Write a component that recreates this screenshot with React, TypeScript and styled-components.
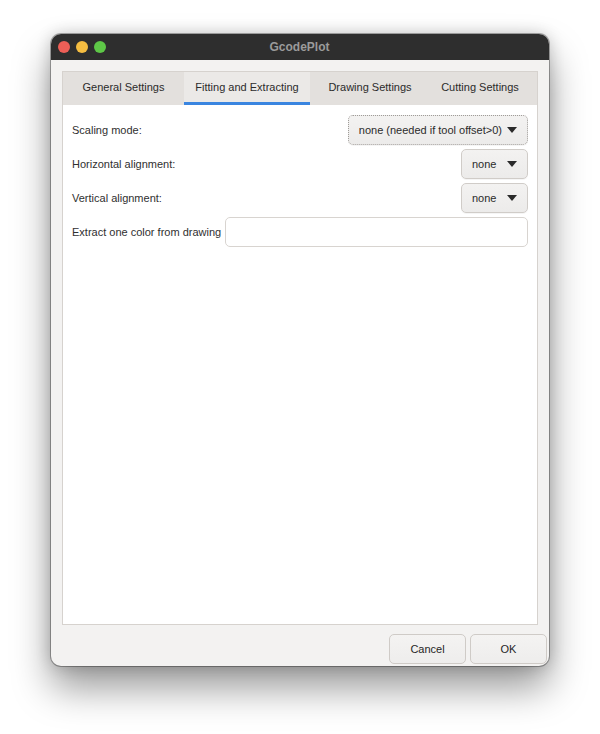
import React from "react";
import styled, { createGlobalStyle } from "styled-components";

const Global = createGlobalStyle`
  html, body { margin: 0; padding: 0; background: #ffffff; }
  body { font-family: "Liberation Sans", Arial, sans-serif; }
  * { box-sizing: border-box; }
`;

const Page = styled.div`
  width: 600px;
  height: 734px;
  padding: 34px 0 0 51px;
`;

const Window = styled.div`
  width: 498px;
  height: 632px;
  border-radius: 10px;
  overflow: hidden;
  display: flex;
  flex-direction: column;
  background: #f3f2f1;
  box-shadow: 0 0 0 1px rgba(0, 0, 0, 0.3), 0 22px 38px rgba(0, 0, 0, 0.4),
    0 0 16px rgba(0, 0, 0, 0.2);
`;

const TitleBar = styled.div`
  height: 26px;
  flex: none;
  background: #2e2e2e;
  display: grid;
  grid-template-columns: 1fr auto 1fr;
  align-items: center;
  padding: 0 8px 0 7px;
`;

const Lights = styled.div`
  display: flex;
  gap: 6px;
`;

const Light = styled.span<{ $c: string }>`
  width: 12px;
  height: 12px;
  border-radius: 50%;
  background: ${(p) => p.$c};
`;

const Title = styled.div`
  font-weight: bold;
  font-size: 12px;
  color: #9b9b9b;
`;

const Body = styled.div`
  flex: 1;
  display: flex;
  flex-direction: column;
  padding: 11px 2px 2px 11px;
`;

const TabWidget = styled.div`
  width: 476px;
  flex: 1;
  display: flex;
  flex-direction: column;
  border: 1px solid #d6d2ce;
`;

const TabBar = styled.div`
  height: 33px;
  display: flex;
  background: #e3e0dd;
`;

const Tab = styled.div<{ $w: number; $active?: boolean }>`
  width: ${(p) => p.$w}px;
  display: flex;
  align-items: center;
  justify-content: center;
  font-size: 11px;
  color: #2b2b2b;
  background: ${(p) => (p.$active ? "#ebe9e7" : "transparent")};
  border-bottom: 3px solid ${(p) => (p.$active ? "#3a85e0" : "transparent")};
`;

const Panel = styled.div`
  flex: 1;
  background: #ffffff;
  padding: 10px 9px 10px 9px;
  display: flex;
  flex-direction: column;
  gap: 4px;
`;

const Row = styled.div`
  height: 30px;
  display: flex;
  align-items: center;
  gap: 4px;
`;

const Label = styled.div`
  flex: 1;
  font-size: 11px;
  color: #303030;
  white-space: nowrap;
`;

const ShortLabel = styled(Label)`
  flex: none;
`;

const Combo = styled.div<{ $focus?: boolean; $minW?: number }>`
  height: 30px;
  min-width: ${(p) => p.$minW ?? 0}px;
  display: flex;
  align-items: center;
  justify-content: space-between;
  gap: 5px;
  padding: 0 10px 0 10px;
  border-radius: 5px;
  border: 1px ${(p) => (p.$focus ? "dotted #a09c98" : "solid #d0ccc8")};
  background: linear-gradient(#f3f2f1, #ecebea);
  box-shadow: 0 1px 0 rgba(0, 0, 0, 0.04);
  font-size: 11px;
  color: #2b2b2b;
  white-space: nowrap;
`;

const Arrow = styled.svg`
  width: 10px;
  height: 6px;
  flex: none;
`;

const TextInput = styled.div`
  flex: 1;
  height: 30px;
  border: 1px solid #d8d4d0;
  border-radius: 5px;
  background: #fff;
`;

const Footer = styled.div`
  height: 39px;
  flex: none;
  display: flex;
  justify-content: flex-end;
  align-items: flex-end;
  gap: 4px;
`;

const Button = styled.div`
  width: 77px;
  height: 30px;
  display: flex;
  align-items: center;
  justify-content: center;
  border: 1px solid #cfcbc7;
  border-radius: 5px;
  background: linear-gradient(#f4f3f2, #eeedec);
  font-size: 11px;
  color: #262626;
`;

const DownArrow = () => (
  <Arrow viewBox="0 0 10 6">
    <path d="M0 0 L10 0 L5 6 Z" fill="#2a2a2a" />
  </Arrow>
);

export default function App() {
  return (
    <>
      <Global />
      <Page>
        <Window>
          <TitleBar>
            <Lights>
              <Light $c="#ee5f57" />
              <Light $c="#f5bd41" />
              <Light $c="#5ec747" />
            </Lights>
            <Title>GcodePlot</Title>
            <span />
          </TitleBar>
          <Body>
            <TabWidget>
              <TabBar>
                <Tab $w={121}>General Settings</Tab>
                <Tab $w={126} $active>
                  Fitting and Extracting
                </Tab>
                <Tab $w={120}>Drawing Settings</Tab>
                <Tab $w={100}>Cutting Settings</Tab>
              </TabBar>
              <Panel>
                <Row>
                  <Label>Scaling mode:</Label>
                  <Combo $focus $minW={180}>
                    none (needed if tool offset&gt;0)
                    <DownArrow />
                  </Combo>
                </Row>
                <Row>
                  <Label>Horizontal alignment:</Label>
                  <Combo $minW={67}>
                    none
                    <DownArrow />
                  </Combo>
                </Row>
                <Row>
                  <Label>Vertical alignment:</Label>
                  <Combo $minW={67}>
                    none
                    <DownArrow />
                  </Combo>
                </Row>
                <Row>
                  <ShortLabel>Extract one color from drawing</ShortLabel>
                  <TextInput />
                </Row>
              </Panel>
            </TabWidget>
            <Footer>
              <Button>Cancel</Button>
              <Button>OK</Button>
            </Footer>
          </Body>
        </Window>
      </Page>
    </>
  );
}
